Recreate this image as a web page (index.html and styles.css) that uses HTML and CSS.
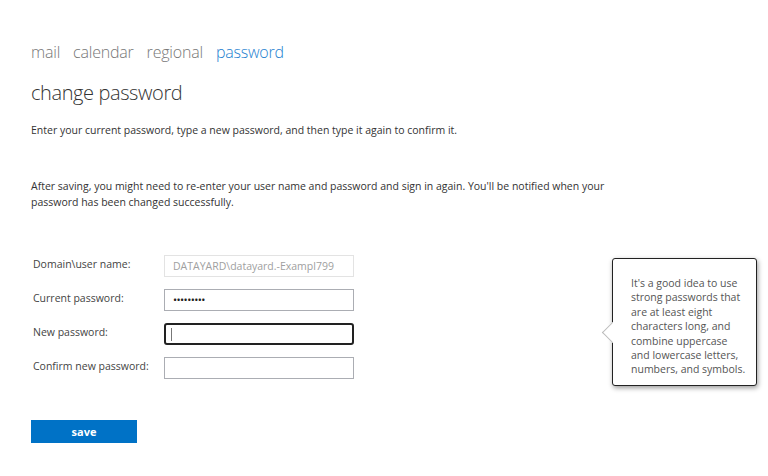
FILE: index.html
```html
<!DOCTYPE html>
<html>
<head>
<meta charset="utf-8">
<link rel="stylesheet" href="styles.css">
</head>
<body>
<div class="page">
  <nav class="tabs">
    <a class="tab">mail</a>
    <a class="tab">calendar</a>
    <a class="tab">regional</a>
    <a class="tab active">password</a>
  </nav>
  <h1 class="title">change password</h1>
  <p class="intro">Enter your current password, type a new password, and then type it again to confirm it.</p>
  <p class="note">After saving, you might need to re-enter your user name and password and sign in again. You'll be notified when your password has been changed successfully.</p>
  <div class="form-area">
    <div class="form">
      <div class="row">
        <label class="label">Domain\user name:</label>
        <div class="input disabled">DATAYARD\datayard.-Exampl799</div>
      </div>
      <div class="row">
        <label class="label">Current password:</label>
        <div class="input dots">•••••••••</div>
      </div>
      <div class="row">
        <label class="label">New password:</label>
        <div class="input focused"><span class="caret"></span></div>
      </div>
      <div class="row">
        <label class="label">Confirm new password:</label>
        <div class="input"></div>
      </div>
    </div>
    <div class="tip">
      <span class="tip-arrow"></span>
      <span class="tip-line">It's a good idea to use</span>
      <span class="tip-line">strong passwords that</span>
      <span class="tip-line">are at least eight</span>
      <span class="tip-line">characters long, and</span>
      <span class="tip-line">combine uppercase</span>
      <span class="tip-line">and lowercase letters,</span>
      <span class="tip-line">numbers, and symbols.</span>
    </div>
  </div>
  <button class="save">save</button>
</div>
</body>
</html>
```
FILE: styles.css
```css
html, body {
  margin: 0;
  padding: 0;
  background: #ffffff;
}
body {
  font-family: "Open Sans", "Noto Sans", sans-serif;
  color: #333333;
  width: 768px;
  height: 476px;
  overflow: hidden;
}
.page {
  padding: 38px 0 0 31px;
}
.tabs {
  display: flex;
  gap: 13px;
  font-size: 16px;
  font-weight: 300;
  line-height: 28px;
  letter-spacing: -0.2px;
}
.tab {
  color: #777777;
}
.tab.active {
  color: #1e7fd0;
}
.title {
  margin: 12px 0 0 0;
  font-size: 20px;
  font-weight: 300;
  line-height: 30px;
  letter-spacing: -0.4px;
  color: #333333;
}
.intro {
  margin: 14px 0 0 0;
  font-size: 10.5px;
  line-height: 16px;
}
.note {
  margin: 40px 0 0 0;
  font-size: 10.5px;
  line-height: 16px;
  width: 600px;
}
.form-area {
  display: flex;
  align-items: flex-start;
  margin-top: 38px;
}
.form {
  display: flex;
  flex-direction: column;
  gap: 12px;
  margin-top: 7px;
}
.row {
  display: flex;
  align-items: center;
  height: 22px;
}
.label {
  width: 131px;
  padding-left: 2px;
  font-size: 10.5px;
  color: #444444;
  margin-top: -4px;
}
.input {
  box-sizing: border-box;
  width: 190px;
  height: 22px;
  border: 1px solid #abadb3;
  background: #fff;
  font-size: 10.5px;
  line-height: 20px;
  padding-left: 8px;
}
.input.disabled {
  border-color: #e3e3e3;
  color: #a0a0a0;
}
.input.dots {
  font-size: 11px;
  letter-spacing: -0.6px;
  color: #222;
}
.input.focused {
  border: 2px solid #222;
  border-radius: 3px;
  padding-left: 5px;
  display: flex;
  align-items: center;
}
.caret {
  width: 1px;
  height: 13px;
  background: #777;
}
.tip {
  position: relative;
  box-sizing: border-box;
  width: 145px;
  height: 128px;
  margin-left: 258px;
  margin-top: 10px;
  padding: 17px 4px 0 18px;
  border: 1px solid #222;
  border-radius: 3px;
  box-shadow: 1px 2px 5px rgba(0,0,0,0.4);
  font-size: 10.5px;
  line-height: 14.4px;
  color: #555555;
  background: #fff;
  display: flex;
  flex-direction: column;
}
.tip-line {
  white-space: nowrap;
}
.tip-arrow {
  position: absolute;
  left: -8px;
  top: 66px;
  width: 14px;
  height: 14px;
  background: #fff;
  border-left: 1px solid #bbb;
  border-bottom: 1px solid #bbb;
  transform: rotate(45deg);
}
.save {
  display: block;
  margin-top: 34px;
  width: 106px;
  height: 23px;
  border: none;
  background: #0072c6;
  color: #fff;
  font-family: "Open Sans", sans-serif;
  font-weight: 700;
  font-size: 11px;
  padding: 0;
}
```
